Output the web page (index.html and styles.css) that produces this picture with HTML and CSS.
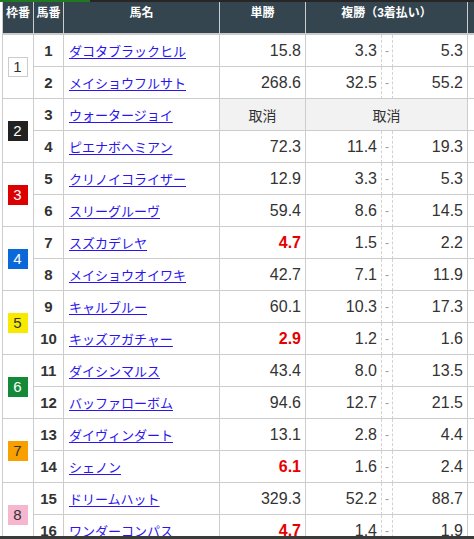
FILE: index.html
```html
<!DOCTYPE html>
<html lang="ja">
<head>
<meta charset="utf-8">
<title>オッズ</title>
<link rel="stylesheet" href="styles.css">
</head>
<body>
<div class="topbar"><div class="topbar-accent"></div></div>
<div class="table-wrap">
<table class="odds-table">
  <colgroup>
    <col class="c-waku"><col class="c-num"><col class="c-name"><col class="c-win"><col class="c-pl"><col class="c-dash"><col class="c-ph"><col class="c-cut">
  </colgroup>
  <thead>
    <tr>
      <th>枠番</th><th>馬番</th><th>馬名</th><th>単勝</th><th colspan="3">複勝（3着払い）</th><th></th>
    </tr>
  </thead>
  <tbody>
    <tr><td rowspan="2" class="waku"><span class="waku-box w1">1</span></td><td class="num">1</td><td class="name"><a href="#">ダコタブラックヒル</a></td><td class="win">15.8</td><td class="pl">3.3</td><td class="dash">-</td><td class="ph">5.3</td><td></td></tr>
    <tr><td class="num">2</td><td class="name"><a href="#">メイショウフルサト</a></td><td class="win">268.6</td><td class="pl">32.5</td><td class="dash">-</td><td class="ph">55.2</td><td></td></tr>

    <tr><td rowspan="2" class="waku"><span class="waku-box w2">2</span></td><td class="num">3</td><td class="name"><a href="#">ウォータージョイ</a></td><td class="scratch">取消</td><td class="scratch" colspan="3">取消</td><td></td></tr>
    <tr><td class="num">4</td><td class="name"><a href="#">ピエナボヘミアン</a></td><td class="win">72.3</td><td class="pl">11.4</td><td class="dash">-</td><td class="ph">19.3</td><td></td></tr>

    <tr><td rowspan="2" class="waku"><span class="waku-box w3">3</span></td><td class="num">5</td><td class="name"><a href="#">クリノイコライザー</a></td><td class="win">12.9</td><td class="pl">3.3</td><td class="dash">-</td><td class="ph">5.3</td><td></td></tr>
    <tr><td class="num">6</td><td class="name"><a href="#">スリーグルーヴ</a></td><td class="win">59.4</td><td class="pl">8.6</td><td class="dash">-</td><td class="ph">14.5</td><td></td></tr>

    <tr><td rowspan="2" class="waku"><span class="waku-box w4">4</span></td><td class="num">7</td><td class="name"><a href="#">スズカデレヤ</a></td><td class="win fav">4.7</td><td class="pl">1.5</td><td class="dash">-</td><td class="ph">2.2</td><td></td></tr>
    <tr><td class="num">8</td><td class="name"><a href="#">メイショウオイワキ</a></td><td class="win">42.7</td><td class="pl">7.1</td><td class="dash">-</td><td class="ph">11.9</td><td></td></tr>

    <tr><td rowspan="2" class="waku"><span class="waku-box w5">5</span></td><td class="num">9</td><td class="name"><a href="#">キャルブルー</a></td><td class="win">60.1</td><td class="pl">10.3</td><td class="dash">-</td><td class="ph">17.3</td><td></td></tr>
    <tr><td class="num">10</td><td class="name"><a href="#">キッズアガチャー</a></td><td class="win fav">2.9</td><td class="pl">1.2</td><td class="dash">-</td><td class="ph">1.6</td><td></td></tr>

    <tr><td rowspan="2" class="waku"><span class="waku-box w6">6</span></td><td class="num">11</td><td class="name"><a href="#">ダイシンマルス</a></td><td class="win">43.4</td><td class="pl">8.0</td><td class="dash">-</td><td class="ph">13.5</td><td></td></tr>
    <tr><td class="num">12</td><td class="name"><a href="#">バッファローボム</a></td><td class="win">94.6</td><td class="pl">12.7</td><td class="dash">-</td><td class="ph">21.5</td><td></td></tr>

    <tr><td rowspan="2" class="waku"><span class="waku-box w7">7</span></td><td class="num">13</td><td class="name"><a href="#">ダイヴィンダート</a></td><td class="win">13.1</td><td class="pl">2.8</td><td class="dash">-</td><td class="ph">4.4</td><td></td></tr>
    <tr><td class="num">14</td><td class="name"><a href="#">シェノン</a></td><td class="win fav">6.1</td><td class="pl">1.6</td><td class="dash">-</td><td class="ph">2.4</td><td></td></tr>

    <tr><td rowspan="2" class="waku"><span class="waku-box w8">8</span></td><td class="num">15</td><td class="name"><a href="#">ドリームハット</a></td><td class="win">329.3</td><td class="pl">52.2</td><td class="dash">-</td><td class="ph">88.7</td><td></td></tr>
    <tr><td class="num">16</td><td class="name"><a href="#">ワンダーコンパス</a></td><td class="win fav">4.7</td><td class="pl">1.4</td><td class="dash">-</td><td class="ph">1.9</td><td></td></tr>
  </tbody>
</table>
</div>
<div class="bottom-bar"></div>
</body>
</html>
```
FILE: styles.css
```css
html, body {
  margin: 0;
  padding: 0;
  overflow: hidden;
  background: #ffffff;
}
body {
  font-family: "Liberation Sans", "Noto Sans CJK JP", sans-serif;
  color: #333333;
}
.topbar {
  height: 2px;
  background: #262626;
}
.topbar-accent {
  width: 90px;
  height: 2px;
  background: #1f7a1f;
}
.table-wrap {
  width: 100%;
  height: 537px;
  overflow: hidden;
}
.odds-table {
  table-layout: fixed;
  border-collapse: separate;
  border-spacing: 0;
  width: 526px;
  margin-left: 2px;
  border-left: 1px solid #cccccc;
}
.c-waku { width: 31px; }
.c-num { width: 30px; }
.c-name { width: 156px; }
.c-win { width: 86px; }
.c-pl { width: 76px; }
.c-dash { width: 11px; }
.c-ph { width: 75px; }
.c-cut { width: 60px; }

.odds-table th {
  box-sizing: border-box;
  height: 33px;
  padding: 3px 0 0;
  vertical-align: top;
  background: #34454f;
  color: #ffffff;
  font-size: 12px;
  font-weight: bold;
  line-height: 17px;
  text-align: center;
  white-space: nowrap;
  border-right: 1px solid #c8cdd0;
  border-bottom: 2px solid #cccccc;
}
.odds-table td {
  box-sizing: border-box;
  height: 32px;
  padding: 0;
  border-right: 1px solid #cccccc;
  border-bottom: 1px solid #cccccc;
  vertical-align: middle;
  white-space: nowrap;
  overflow: hidden;
}
.waku {
  text-align: center;
}
.waku-box {
  display: inline-block;
  box-sizing: border-box;
  width: 20px;
  height: 20px;
  line-height: 20px;
  font-size: 15px;
  text-align: center;
  vertical-align: middle;
  margin-left: -1px;
}
.w1 { background: #ffffff; color: #333333; border: 1px solid #cccccc; line-height: 18px; }
.w2 { background: #222222; color: #ffffff; }
.w3 { background: #dd0000; color: #ffffff; }
.w4 { background: #0b68d8; color: #ffffff; }
.w5 { background: #f7ea00; color: #333333; }
.w6 { background: #148a38; color: #ffffff; }
.w7 { background: #f7a000; color: #333333; }
.w8 { background: #f7b6cf; color: #333333; }

.num {
  text-align: center;
  font-size: 15px;
  font-weight: bold;
  color: #333333;
}
.name {
  padding-left: 5px !important;
  font-size: 13px;
}
.name a {
  color: #2a14f0;
  text-decoration: underline;
  text-underline-offset: 2px;
}
.win, .pl, .ph {
  text-align: right;
  padding-right: 4px !important;
  font-size: 16px;
  color: #333333;
}
.pl {
  border-right: 1px dashed #d2d2d2 !important;
}
.dash {
  text-align: center;
  font-size: 12px;
  color: #999999;
  border-right: 1px dashed #d2d2d2 !important;
}
.fav {
  color: #e60000;
  font-weight: bold;
}
.scratch {
  background: #f2f2f2;
  text-align: center;
  font-size: 14px;
  color: #333333;
}
.bottom-bar {
  position: fixed;
  left: 0;
  right: 0;
  bottom: 0;
  height: 3px;
  background: #3a3a3a;
}
```
